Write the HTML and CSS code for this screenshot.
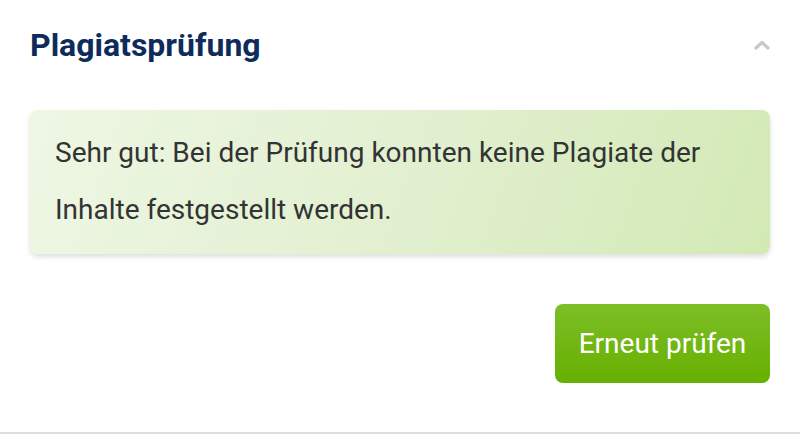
FILE: index.html
```html
<!DOCTYPE html>
<html lang="de">
<head>
<meta charset="utf-8">
<link rel="stylesheet" href="styles.css">
</head>
<body>
<section class="panel">
  <header class="panel-head">
    <h2 class="title">Plagiatsprüfung</h2>
    <svg class="chevron" width="16" height="10" viewBox="0 0 16 10"><path d="M2 8 L8 2.5 L14 8" fill="none" stroke="#c8c8c8" stroke-width="3.2" stroke-linecap="round" stroke-linejoin="round"/></svg>
  </header>
  <div class="result">Sehr gut: Bei der Prüfung konnten keine Plagiate der Inhalte festgestellt werden.</div>
  <div class="actions">
    <button class="btn">Erneut prüfen</button>
  </div>
</section>
</body>
</html>
```
FILE: styles.css
```css
html, body { margin: 0; padding: 0; background: #fff; }
body { font-family: Roboto, "Noto Sans", sans-serif; width: 800px; height: 434px; overflow: hidden; }
.panel { box-sizing: border-box; height: 434px; padding: 0 30px; border-bottom: 2px solid #dedede; }
.panel-head { display: flex; align-items: center; justify-content: space-between; height: 90px; }
.title { margin: 0; font-size: 32px; font-weight: 700; color: #0e2c5b; }
.result { margin-top: 20px; box-sizing: border-box; height: 144px; padding: 14px 25px; border-radius: 8px; font-size: 28px; line-height: 57px; color: #333; background: linear-gradient(110deg, #eef7e4 0%, #e2f0d0 50%, #d3e9b5 100%); box-shadow: 0 3px 5px rgba(0,0,0,0.13); }
.actions { display: flex; justify-content: flex-end; margin-top: 50px; }
.btn { width: 215px; height: 79px; border: 0; border-radius: 8px; background: linear-gradient(#7dbe27, #66b000); color: #fff; font-family: Roboto, sans-serif; font-size: 28px; }
```
